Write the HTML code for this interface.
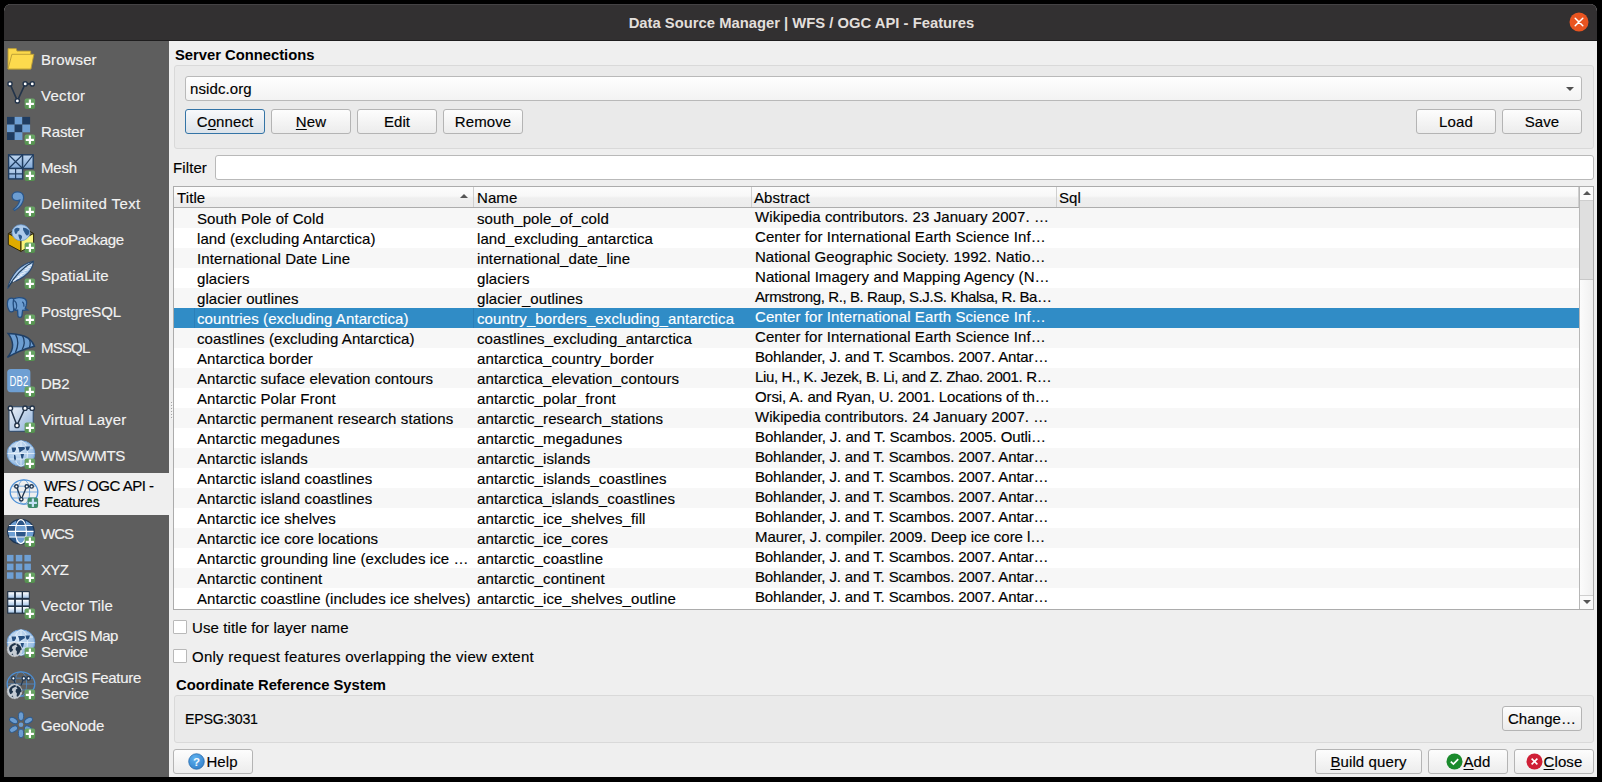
<!DOCTYPE html><html><head><meta charset="utf-8"><style>*{box-sizing:border-box;margin:0;padding:0}
html,body{width:1602px;height:782px;overflow:hidden;background:#000;font-family:"Liberation Sans",sans-serif;font-size:15px;letter-spacing:0.1px;color:#000;-webkit-text-stroke:0.15px currentColor}
#win{position:absolute;left:4px;top:4px;width:1593px;height:773px;background:#efefef;border-radius:7px 7px 0 0;overflow:hidden}
#titlebar{position:absolute;left:0;top:0;width:1593px;height:37px;background:#323031;border-bottom:1px solid #1e1d1e;box-shadow:inset 0 1px 0 #444244}
#title{position:absolute;-webkit-text-stroke:0;left:0;top:9px;width:1593px;text-align:center;color:#e2dfdb;font-weight:bold;font-size:14.8px;line-height:20px;padding-left:2px;letter-spacing:0}
#tclose{position:absolute;left:1565px;top:8px;width:20px;height:20px}
#tclose svg{display:block}
#sidebar{position:absolute;left:0;top:37px;width:165px;height:736px;background:#5e5e5e}
.item{position:absolute;left:0;width:165px}
.item.sel{background:#efefef}
.item .ico{position:absolute;left:0;top:0;width:36px;height:36px}
.item .ico svg{display:block}
.item.sel .ico{left:3px}
.item .lbl{position:absolute;left:37px;margin-top:1px;line-height:20px;color:#f2f2f2;white-space:nowrap}
.item .lbl2{position:absolute;left:37px;top:5px;line-height:16px;color:#f2f2f2;white-space:nowrap}
.item.sel .lbl2{left:40px;color:#000}
#main{position:absolute;left:165px;top:37px;width:1428px;height:736px}
.gtitle{position:absolute;-webkit-text-stroke:0;font-weight:bold;font-size:14.8px;line-height:20px;white-space:nowrap}
.gbox{position:absolute;background:#eaeaea;border:1px solid #d9d9d9;border-radius:3px}
.lab{position:absolute;line-height:20px;white-space:nowrap}
.combo{position:absolute;border:1px solid #b9b9b9;border-radius:3px;background:linear-gradient(#fefefe,#f3f3f3)}
.ctext{position:absolute;left:4px;top:2px;line-height:20px}
.carrow{position:absolute;right:7px;top:9.5px;width:0;height:0;border-left:4px solid transparent;border-right:4px solid transparent;border-top:4px solid #505050}
.btn{position:absolute;border:1px solid #b4b4b4;border-radius:3px;background:linear-gradient(#fdfdfd,#ececec);text-align:center}
.btn span{display:inline-flex;align-items:center;line-height:20px;margin-top:2px}
.btn.def{border-color:#3474a6;background:linear-gradient(#f8f9fb,#dce3ea)}
u{text-decoration:underline;text-underline-offset:2px}
.ledit{position:absolute;background:#fff;border:1px solid #b9b9b9;border-radius:3px}
#table{position:absolute;left:4px;top:145px;width:1421px;height:424px;border:1px solid #acacac;background:#fff;overflow:hidden}
#thead{position:absolute;left:0;top:0;width:1405px;height:21px;border-bottom:1px solid #adadad;background:linear-gradient(#fcfcfc 0,#f8f8f8 45%,#efefef 55%,#ececec 100%)}
.th{position:absolute;top:0;height:20px;border-right:1px solid #cfcfcf}
.th span{position:absolute;left:2px;top:1px;line-height:20px;white-space:nowrap}
.sortarrow{position:absolute;left:286px;top:7px;width:0;height:0;border-left:4px solid transparent;border-right:4px solid transparent;border-bottom:4px solid #555}
#tbody{position:absolute;left:0;top:21px;width:1405px;height:401px}
.row{position:absolute;left:0;width:1405px;height:20px;background:#fff}
.row.odd{background:#f7f7f7}
.row.sel{background:#308cc6;color:#fff}
.row span{position:absolute;top:1px;line-height:20px;white-space:nowrap}
.c1{left:23px}.c2{left:303px}.c3{left:581px;top:-1px!important}
#vscroll{position:absolute;left:1405px;top:0;width:14px;height:422px;border-left:1px solid #b7b7b7;background:linear-gradient(90deg,#fcfcfc,#f0f0f0)}
.sup,.sdown{position:absolute;left:0;width:13px;height:14px;background:#fafafa}
.sup{top:0;border-bottom:1px solid #cfcfcf}
.sdown{bottom:0;border-top:1px solid #cfcfcf}
.sup:after,.sdown:after{content:"";position:absolute;left:3px;width:0;height:0;border-left:4px solid transparent;border-right:4px solid transparent}
.sup:after{top:4px;border-bottom:4px solid #555}
.sdown:after{top:4px;border-top:4px solid #555}
.shandle{position:absolute;left:0;top:14px;width:13px;height:79px;background:#dfdfdf;border-bottom:1px solid #c9c9c9}
.chk{position:absolute;width:14px;height:14px;background:#fff;border:1px solid #b9b9b9;border-radius:1px}

.fl{position:absolute;top:0;width:1px;height:20px;background:#2b7fb8}
</style></head><body>
<svg width="0" height="0" style="position:absolute"><defs><linearGradient id="gbad" x1="0" y1="0" x2="0" y2="1"><stop offset="0" stop-color="#6ba867"/><stop offset="1" stop-color="#54904f"/></linearGradient><linearGradient id="gmesh" x1="0" y1="0" x2="0" y2="1"><stop offset="0" stop-color="#c2d8f0"/><stop offset="1" stop-color="#7ea6d6"/></linearGradient><linearGradient id="gvirt" x1="0" y1="0" x2="1" y2="1"><stop offset="0" stop-color="#eef3f9"/><stop offset="1" stop-color="#8fb1da"/></linearGradient><linearGradient id="gvt" x1="0" y1="0" x2="0" y2="1"><stop offset="0" stop-color="#ffffff"/><stop offset="1" stop-color="#a9c8ea"/></linearGradient><radialGradient id="gglobe" cx="0.4" cy="0.35" r="0.7"><stop offset="0" stop-color="#d6e6f6"/><stop offset="1" stop-color="#8db5e0"/></radialGradient></defs></svg>
<div id="win">
<div id="titlebar"><div id="title">Data Source Manager | WFS / OGC API - Features</div><div id="tclose"><svg width="20" height="20" viewBox="0 0 20 20"><circle cx="10" cy="10" r="9.5" fill="#e95420"/><path d="M6.2 6.2L13.8 13.8M13.8 6.2L6.2 13.8" stroke="#fff" stroke-width="1.5" stroke-linecap="round"/></svg></div></div>
<div id="sidebar">
<div class="item" style="top:0px;height:36px">
<div class="ico" style="top:0px"><svg width="36" height="36" viewBox="0 0 36 36" ><path d="M4 28V7.6h8.2l0.8 2.5h13.7V28Z" fill="#fcd84b" stroke="#b89b36" stroke-width="0.9"/><path d="M7.9 13.3H29.9L26.9 28H4Z" fill="#fdda4d" stroke="#b89b36" stroke-width="0.9"/></svg></div>
<div class="lbl" style="top:8px;letter-spacing:0.1px">Browser</div>
</div>
<div class="item" style="top:36px;height:36px">
<div class="ico" style="top:0px"><svg width="36" height="36" viewBox="0 0 36 36" ><path d="M6 6.9L13.4 23.9L21.2 6.9L28.3 6.9" fill="none" stroke="#23344a" stroke-width="1.6"/><circle cx="6" cy="6.9" r="2.1" fill="#fff" stroke="#23344a" stroke-width="1.4"/><circle cx="21.2" cy="6.9" r="2.1" fill="#fff" stroke="#23344a" stroke-width="1.4"/><circle cx="28.3" cy="6.9" r="2.1" fill="#fff" stroke="#23344a" stroke-width="1.4"/><circle cx="13.4" cy="23.9" r="2.1" fill="#fff" stroke="#23344a" stroke-width="1.4"/><rect x="20.6" y="21.4" width="10.5" height="10.5" rx="2" fill="url(#gbad)"/><rect x="21.8" y="25.8" width="8.1" height="2.2" fill="#fff"/><rect x="24.8" y="22.5" width="2.2" height="8.4" fill="#fff"/></svg></div>
<div class="lbl" style="top:8px;letter-spacing:0.3px">Vector</div>
</div>
<div class="item" style="top:72px;height:36px">
<div class="ico" style="top:0px"><svg width="36" height="36" viewBox="0 0 36 36" ><rect x="3.00" y="3.90" width="7.75" height="7.75" fill="#1f3c60"/><rect x="10.67" y="3.90" width="7.75" height="7.75" fill="#6e9fd3"/><rect x="18.34" y="3.90" width="7.75" height="7.75" fill="#1f3c60"/><rect x="3.00" y="11.57" width="7.75" height="7.75" fill="#6e9fd3"/><rect x="10.67" y="11.57" width="7.75" height="7.75" fill="#1f3c60"/><rect x="18.34" y="11.57" width="7.75" height="7.75" fill="#6e9fd3"/><rect x="3.00" y="19.24" width="7.75" height="7.75" fill="#1f3c60"/><rect x="10.67" y="19.24" width="7.75" height="7.75" fill="#6e9fd3"/><rect x="20.6" y="21.4" width="10.5" height="10.5" rx="2" fill="url(#gbad)"/><rect x="21.8" y="25.8" width="8.1" height="2.2" fill="#fff"/><rect x="24.8" y="22.5" width="2.2" height="8.4" fill="#fff"/></svg></div>
<div class="lbl" style="top:8px;letter-spacing:-0.13px">Raster</div>
</div>
<div class="item" style="top:108px;height:36px">
<div class="ico" style="top:0px"><svg width="36" height="36" viewBox="0 0 36 36" ><g stroke="#1f3c60" stroke-width="1.4" fill="url(#gmesh)"><rect x="4.6" y="5.8" width="14" height="13.7"/><rect x="18.6" y="5.8" width="10.6" height="13.7"/><rect x="4.6" y="19.5" width="14" height="10.4"/></g><path d="M4.6 5.8L18.6 19.5M18.6 5.8L4.6 19.5M18.6 19.5L29.2 5.8M11.6 19.5V29.9M4.6 24.9H18.6" stroke="#1f3c60" stroke-width="1.2" fill="none"/><rect x="20.6" y="21.4" width="10.5" height="10.5" rx="2" fill="url(#gbad)"/><rect x="21.8" y="25.8" width="8.1" height="2.2" fill="#fff"/><rect x="24.8" y="22.5" width="2.2" height="8.4" fill="#fff"/></svg></div>
<div class="lbl" style="top:8px;letter-spacing:-0.17px">Mesh</div>
</div>
<div class="item" style="top:144px;height:36px">
<div class="ico" style="top:0px"><svg width="36" height="36" viewBox="0 0 36 36" ><path d="M19.6 12.8C19.6 8.6 17.1 6.9 13.6 6.9C10.4 6.9 8.1 8.8 8.1 11.3C8.1 13.9 10.3 15.6 13.1 15.6C14.1 15.6 15.1 15.4 15.8 15.1C15.1 18.8 12.6 21.9 9.5 24.3L10.7 25.6C15.6 22.6 19.6 18.2 19.6 12.8Z" fill="#6c9dd1" stroke="#2a568a" stroke-width="1.2"/><rect x="20.6" y="21.4" width="10.5" height="10.5" rx="2" fill="url(#gbad)"/><rect x="21.8" y="25.8" width="8.1" height="2.2" fill="#fff"/><rect x="24.8" y="22.5" width="2.2" height="8.4" fill="#fff"/></svg></div>
<div class="lbl" style="top:8px;letter-spacing:0.41px">Delimited Text</div>
</div>
<div class="item" style="top:180px;height:36px">
<div class="ico" style="top:0px"><svg width="36" height="36" viewBox="0 0 36 36" ><path d="M4.3 12.5L8.6 10.2M29.6 12.5L25.4 10.2" stroke="#2a2408" stroke-width="1"/><path d="M4.3 12.5L17 19.2V30.4L4.3 23.6Z" fill="#dfab00" stroke="#2a2408" stroke-width="1"/><path d="M17 19.2L29.6 12.5V23.6L17 30.4Z" fill="#fbf47c" stroke="#2a2408" stroke-width="1"/><ellipse cx="16.9" cy="11.7" rx="8.9" ry="8" fill="#aecbeb" stroke="#6a9ad0" stroke-width="0.8"/><path d="M10.5 8C12 6.5 14.5 6.3 15.6 7.3L15.2 9.5L13.6 10.6L12.9 12.6L11.5 12.9C10.5 11.5 10 9.5 10.5 8Z M19 6.8C21 6.4 23.6 7.5 25 9.6C25.6 11.2 25.1 13.2 24.1 14.2L22.5 14.6L21 12.6L20 10.6C19.2 9.6 18.8 8.1 19 6.8Z M14.4 13.6C16 13.2 17.6 14 18.1 15.6C17.9 17.6 17.1 19.2 16.1 19.6L15.2 17.2C14.8 16 14.2 14.9 14.4 13.6Z" fill="#2d5b8e"/><rect x="20.6" y="21.4" width="10.5" height="10.5" rx="2" fill="url(#gbad)"/><rect x="21.8" y="25.8" width="8.1" height="2.2" fill="#fff"/><rect x="24.8" y="22.5" width="2.2" height="8.4" fill="#fff"/></svg></div>
<div class="lbl" style="top:8px;letter-spacing:-0.41px">GeoPackage</div>
</div>
<div class="item" style="top:216px;height:36px">
<div class="ico" style="top:0px"><svg width="36" height="36" viewBox="0 0 36 36" ><path d="M3.6 31.5C4.5 27 7.5 20 12.5 14C17 9 22.5 6 29.4 4.3C29.2 8.5 27.5 12.5 24 16C19.5 20.5 13 23.8 8 25C6.2 27 5 29.5 3.6 31.5Z" fill="#a8c7ea" stroke="#2a4a72" stroke-width="1.1"/><path d="M4.5 30C9 22 16 12 29 4.8" stroke="#23405f" stroke-width="1.2" fill="none"/><path d="M9 24.5L12 22.5M11 22.5L15.5 20.5M13.5 20L18.5 18M16 17.5L21.5 15.5M18.5 14.5L24.5 12.5M21 12L26.5 10M23.5 9.5L28 8" stroke="#e8f1fb" stroke-width="1.1"/><rect x="20.6" y="21.4" width="10.5" height="10.5" rx="2" fill="url(#gbad)"/><rect x="21.8" y="25.8" width="8.1" height="2.2" fill="#fff"/><rect x="24.8" y="22.5" width="2.2" height="8.4" fill="#fff"/></svg></div>
<div class="lbl" style="top:8px;letter-spacing:0.1px">SpatiaLite</div>
</div>
<div class="item" style="top:252px;height:36px">
<div class="ico" style="top:0px"><svg width="36" height="36" viewBox="0 0 36 36" ><path d="M10 5.6C7 4.6 4.3 5.4 3.7 8C3.1 11 3.6 15 5.1 17.5C6.1 19.2 7.8 19.2 9.6 18Z" fill="#6c9dd1" stroke="#244e80" stroke-width="1.3"/><path d="M9.6 6C12.2 4.4 17 4.1 20 5.4C22.6 6.6 23.1 9.6 22.1 13L21.2 15.4L23.6 17L18.6 17.3L17.9 22.8C17.6 25 14.1 25 13.9 22.8L13.6 17.2C11.6 17.6 10.1 17.1 9.6 15C9.1 12 9.1 8 9.6 6Z" fill="#6c9dd1" stroke="#244e80" stroke-width="1.3"/><path d="M10.2 7.5C11.8 8.6 12.8 10.6 12.7 13.2C12.6 15 12.1 16.2 11.2 16.8M18.3 8.8C19.6 9.8 20.2 11.6 19.9 13.8" stroke="#244e80" stroke-width="1.1" fill="none"/><rect x="20.6" y="21.4" width="10.5" height="10.5" rx="2" fill="url(#gbad)"/><rect x="21.8" y="25.8" width="8.1" height="2.2" fill="#fff"/><rect x="24.8" y="22.5" width="2.2" height="8.4" fill="#fff"/></svg></div>
<div class="lbl" style="top:8px;letter-spacing:-0.19px">PostgreSQL</div>
</div>
<div class="item" style="top:288px;height:36px">
<div class="ico" style="top:0px"><svg width="36" height="36" viewBox="0 0 36 36" ><path d="M4.2 4.6C12 5 19.5 6.2 24 9C27.2 11.4 29.5 14.5 30.4 17.2C22 19.4 12.2 23 3.4 28.4C6.5 24.8 8.8 21.5 8.6 16C8.3 11 6.3 7.2 4.2 4.6Z" fill="#6c9dd1" stroke="#1f3f66" stroke-width="1.5"/><path d="M11.5 5.3C14 9.5 14.5 16.5 11.5 23.5M18.5 6.5C20.5 10.5 21 15.5 18.2 20.5M25 9.8C26.5 12.5 26.5 15.5 25.5 18.2" stroke="#1f3f66" stroke-width="1.3" fill="none"/><rect x="20.6" y="21.4" width="10.5" height="10.5" rx="2" fill="url(#gbad)"/><rect x="21.8" y="25.8" width="8.1" height="2.2" fill="#fff"/><rect x="24.8" y="22.5" width="2.2" height="8.4" fill="#fff"/></svg></div>
<div class="lbl" style="top:8px;letter-spacing:-0.8px">MSSQL</div>
</div>
<div class="item" style="top:324px;height:36px">
<div class="ico" style="top:0px"><svg width="36" height="36" viewBox="0 0 36 36" ><rect x="3.2" y="4" width="23.2" height="23.2" rx="3.6" fill="#6e9fd3"/><text x="5.6" y="20.8" font-family="Liberation Sans" font-size="14.2" fill="#fff" textLength="18.8" lengthAdjust="spacingAndGlyphs">DB2</text><rect x="20.6" y="21.4" width="10.5" height="10.5" rx="2" fill="url(#gbad)"/><rect x="21.8" y="25.8" width="8.1" height="2.2" fill="#fff"/><rect x="24.8" y="22.5" width="2.2" height="8.4" fill="#fff"/></svg></div>
<div class="lbl" style="top:8px;letter-spacing:-0.33px">DB2</div>
</div>
<div class="item" style="top:360px;height:36px">
<div class="ico" style="top:0px"><svg width="36" height="36" viewBox="0 0 36 36" ><rect x="5" y="5.8" width="24.2" height="24.5" rx="1" fill="url(#gvirt)" stroke="#2c4868" stroke-width="1"/><path d="M6.4 7.2L13 24.4L21 7.2L28.2 7.2" fill="none" stroke="#23344a" stroke-width="1.5"/><circle cx="6.4" cy="7.2" r="2.2" fill="#fff" stroke="#23344a" stroke-width="1.4"/><circle cx="21" cy="7.2" r="2.2" fill="#fff" stroke="#23344a" stroke-width="1.4"/><circle cx="28.2" cy="7.2" r="2.2" fill="#fff" stroke="#23344a" stroke-width="1.4"/><circle cx="13" cy="24.4" r="2.2" fill="#fff" stroke="#23344a" stroke-width="1.4"/><rect x="20.6" y="21.4" width="10.5" height="10.5" rx="2" fill="url(#gbad)"/><rect x="21.8" y="25.8" width="8.1" height="2.2" fill="#fff"/><rect x="24.8" y="22.5" width="2.2" height="8.4" fill="#fff"/></svg></div>
<div class="lbl" style="top:8px;letter-spacing:0.1px">Virtual Layer</div>
</div>
<div class="item" style="top:396px;height:36px">
<div class="ico" style="top:0px"><svg width="36" height="36" viewBox="0 0 36 36" ><ellipse cx="17" cy="16.5" rx="13.8" ry="12.8" fill="url(#gglobe)" stroke="#6d9fd6" stroke-width="1"/><path d="M3.5 16.5H30.5M5 11H29M5.5 22H28.5M17 3.8V29.2" stroke="#e9f2fb" stroke-width="0.8" fill="none"/><ellipse cx="17" cy="16.5" rx="6.5" ry="12.6" stroke="#e9f2fb" stroke-width="0.8" fill="none"/><path d="M7.5 10.5H12V12.5L10.5 15H8.5ZM14 10H20.5L21 12L18.5 13.5L15.5 15.5L15 12.5ZM21.5 9.5H26L25 12.5L23 14L22 12Z M16.5 17H20L19 21.5L17.5 21.5ZM10 17.5L11.5 18.5L12 22L11 24L10 21.5Z" fill="#264f80"/><rect x="20.6" y="21.4" width="10.5" height="10.5" rx="2" fill="url(#gbad)"/><rect x="21.8" y="25.8" width="8.1" height="2.2" fill="#fff"/><rect x="24.8" y="22.5" width="2.2" height="8.4" fill="#fff"/></svg></div>
<div class="lbl" style="top:8px;letter-spacing:-0.34px">WMS/WMTS</div>
</div>
<div class="item sel" style="top:432px;height:42px">
<div class="ico" style="top:3px"><svg width="36" height="36" viewBox="0 0 36 36" ><ellipse cx="17" cy="16" rx="13.8" ry="12.2" fill="none" stroke="#4b8fd6" stroke-width="1.3"/><path d="M3.5 16H30.5M5.5 10.2H28.5M5.5 22H28.5" stroke="#4b8fd6" stroke-width="0.9" fill="none" opacity="0.8"/><ellipse cx="16.7" cy="16" rx="6" ry="12.2" stroke="#4b8fd6" stroke-width="0.9" fill="none" opacity="0.8"/><path d="M9.4 10.4L14.3 23.3L19.8 10.4L24.6 10.4" fill="none" stroke="#1f3651" stroke-width="1.3"/><circle cx="9.4" cy="10.4" r="1.7" fill="#fff" stroke="#1f3651" stroke-width="1.4"/><circle cx="19.8" cy="10.4" r="1.7" fill="#fff" stroke="#1f3651" stroke-width="1.4"/><circle cx="24.6" cy="10.4" r="1.7" fill="#fff" stroke="#1f3651" stroke-width="1.4"/><circle cx="14.3" cy="23.3" r="1.7" fill="#fff" stroke="#1f3651" stroke-width="1.4"/><rect x="20.6" y="21.4" width="10.5" height="10.5" rx="2" fill="#3f8c6c"/><rect x="21.8" y="25.8" width="8.1" height="2.2" fill="#c6e1f5"/><rect x="24.8" y="22.5" width="2.2" height="8.4" fill="#c6e1f5"/></svg></div>
<div class="lbl2" style="letter-spacing:-0.47px">WFS / OGC API -<br>Features</div>
</div>
<div class="item" style="top:474px;height:36px">
<div class="ico" style="top:0px"><svg width="36" height="36" viewBox="0 0 36 36" ><defs><clipPath id="cwcs"><ellipse cx="16.9" cy="16.6" rx="13.3" ry="12.3"/></clipPath></defs><g clip-path="url(#cwcs)"><rect x="0" y="0" width="36" height="36" fill="#6e9fd3"/><rect x="0" y="10.8" width="36" height="5.6" fill="#2c5688"/><rect x="0" y="22.3" width="36" height="8" fill="#2c5688"/><rect x="12" y="4" width="10" height="6.2" fill="#2c5688"/><rect x="12" y="10.8" width="10" height="5.6" fill="#6e9fd3"/><rect x="12" y="16.4" width="10" height="5.9" fill="#2c5688"/><rect x="12" y="22.3" width="10" height="8" fill="#6e9fd3"/></g><ellipse cx="16.9" cy="16.6" rx="13.3" ry="12.3" fill="none" stroke="#1d3553" stroke-width="1.2"/><path d="M5 10.5H28.5M4 16.4H29.5M5 22H28.5" stroke="#fff" stroke-width="1.1"/><ellipse cx="16.9" cy="16.6" rx="5.5" ry="12" fill="none" stroke="#fff" stroke-width="1.1"/><rect x="20.6" y="21.4" width="10.5" height="10.5" rx="2" fill="url(#gbad)"/><rect x="21.8" y="25.8" width="8.1" height="2.2" fill="#fff"/><rect x="24.8" y="22.5" width="2.2" height="8.4" fill="#fff"/></svg></div>
<div class="lbl" style="top:8px;letter-spacing:-1.0px">WCS</div>
</div>
<div class="item" style="top:510px;height:36px">
<div class="ico" style="top:0px"><svg width="36" height="36" viewBox="0 0 36 36" ><rect x="3" y="3.9" width="6.5" height="6.5" fill="#6e9fd3"/><rect x="11.8" y="3.9" width="6.5" height="6.5" fill="#6e9fd3"/><rect x="20.4" y="3.9" width="6.5" height="6.5" fill="#6e9fd3"/><rect x="3" y="12.6" width="6.5" height="6.5" fill="#6e9fd3"/><rect x="11.8" y="12.6" width="6.5" height="6.5" fill="#6e9fd3"/><rect x="20.4" y="12.6" width="6.5" height="6.5" fill="#6e9fd3"/><rect x="3" y="21.3" width="6.5" height="6.5" fill="#6e9fd3"/><rect x="11.8" y="21.3" width="6.5" height="6.5" fill="#6e9fd3"/><rect x="20.6" y="21.4" width="10.5" height="10.5" rx="2" fill="url(#gbad)"/><rect x="21.8" y="25.8" width="8.1" height="2.2" fill="#fff"/><rect x="24.8" y="22.5" width="2.2" height="8.4" fill="#fff"/></svg></div>
<div class="lbl" style="top:8px;letter-spacing:-0.63px">XYZ</div>
</div>
<div class="item" style="top:546px;height:36px">
<div class="ico" style="top:0px"><svg width="36" height="36" viewBox="0 0 36 36" ><rect x="3.2" y="4.1" width="22.4" height="22.6" fill="#1f3044"/><rect x="4.3" y="5.2" width="5.8" height="5.6" fill="url(#gvt)"/><rect x="11.9" y="5.2" width="5.8" height="5.6" fill="url(#gvt)"/><rect x="19.0" y="5.2" width="5.8" height="5.6" fill="url(#gvt)"/><rect x="4.3" y="12.8" width="5.8" height="5.6" fill="url(#gvt)"/><rect x="11.9" y="12.8" width="5.8" height="5.6" fill="url(#gvt)"/><rect x="19.0" y="12.8" width="5.8" height="5.6" fill="url(#gvt)"/><rect x="4.3" y="20.0" width="5.8" height="5.6" fill="url(#gvt)"/><rect x="11.9" y="20.0" width="5.8" height="5.6" fill="url(#gvt)"/><rect x="19.0" y="20.0" width="5.8" height="5.6" fill="url(#gvt)"/><rect x="20.6" y="21.4" width="10.5" height="10.5" rx="2" fill="url(#gbad)"/><rect x="21.8" y="25.8" width="8.1" height="2.2" fill="#fff"/><rect x="24.8" y="22.5" width="2.2" height="8.4" fill="#fff"/></svg></div>
<div class="lbl" style="top:8px;letter-spacing:0.18px">Vector Tile</div>
</div>
<div class="item" style="top:582px;height:42px">
<div class="ico" style="top:3px"><svg width="36" height="36" viewBox="0 0 36 36" ><ellipse cx="17" cy="16.5" rx="13.8" ry="12.8" fill="url(#gglobe)" stroke="#6d9fd6" stroke-width="1"/><path d="M3.5 16.5H30.5M5 11H29M5.5 22H28.5M17 3.8V29.2" stroke="#e9f2fb" stroke-width="0.8" fill="none"/><ellipse cx="17" cy="16.5" rx="6.5" ry="12.6" stroke="#e9f2fb" stroke-width="0.8" fill="none"/><path d="M7.5 10.5H12V12.5L10.5 15H8.5ZM14 10H20.5L21 12L18.5 13.5L15.5 15.5L15 12.5ZM21.5 9.5H26L25 12.5L23 14L22 12Z M16.5 17H20L19 21.5L17.5 21.5ZM10 17.5L11.5 18.5L12 22L11 24L10 21.5Z" fill="#264f80"/><circle cx="10.6" cy="23.4" r="7.3" fill="#c5ccd4" stroke="#e4e7ea" stroke-width="0.7" stroke-dasharray="1 0.6"/><path d="M5.2 21.5C6.2 19 8.5 17.2 11 17L12.5 18.2L10.5 19.2L8.5 20.2L7.8 22.2L9.2 23.4L8.2 25.2L6.4 26.2C5.4 24.8 5 23 5.2 21.5Z" fill="#1f3349"/><path d="M12.8 17.4C15.4 18.2 17.4 20.6 17.8 23.4L16.4 24.2L15.6 26.6L13.8 28.8L12.6 28.2L12.9 25.6L11.6 23.8L11.9 21.4L13.6 20.4L12.4 19.2Z" fill="#1f3349"/><path d="M7.5 28.2L9.5 29.6L8.6 27.6Z" fill="#1f3349"/><rect x="20.6" y="21.4" width="10.5" height="10.5" rx="2" fill="url(#gbad)"/><rect x="21.8" y="25.8" width="8.1" height="2.2" fill="#fff"/><rect x="24.8" y="22.5" width="2.2" height="8.4" fill="#fff"/></svg></div>
<div class="lbl2" style="letter-spacing:-0.47px">ArcGIS Map<br>Service</div>
</div>
<div class="item" style="top:624px;height:42px">
<div class="ico" style="top:3px"><svg width="36" height="36" viewBox="0 0 36 36" ><ellipse cx="17" cy="16" rx="13.8" ry="12.2" fill="none" stroke="#4b8fd6" stroke-width="1.3"/><path d="M3.5 16H30.5M5.5 10.2H28.5M5.5 22H28.5" stroke="#4b8fd6" stroke-width="0.9" fill="none" opacity="0.8"/><ellipse cx="16.7" cy="16" rx="6" ry="12.2" stroke="#4b8fd6" stroke-width="0.9" fill="none" opacity="0.8"/><path d="M9.4 10.4L11.5 17M19.8 10.4L17 17.5M19.8 10.4H24.6" stroke="#1f3651" stroke-width="1.2" fill="none"/><circle cx="9.4" cy="10.4" r="1.7" fill="#fff" stroke="#1f3651" stroke-width="1.3"/><circle cx="19.8" cy="10.4" r="1.7" fill="#fff" stroke="#1f3651" stroke-width="1.3"/><circle cx="24.6" cy="10.4" r="1.7" fill="#fff" stroke="#1f3651" stroke-width="1.3"/><circle cx="10.6" cy="23.4" r="7.3" fill="#c5ccd4" stroke="#e4e7ea" stroke-width="0.7" stroke-dasharray="1 0.6"/><path d="M5.2 21.5C6.2 19 8.5 17.2 11 17L12.5 18.2L10.5 19.2L8.5 20.2L7.8 22.2L9.2 23.4L8.2 25.2L6.4 26.2C5.4 24.8 5 23 5.2 21.5Z" fill="#1f3349"/><path d="M12.8 17.4C15.4 18.2 17.4 20.6 17.8 23.4L16.4 24.2L15.6 26.6L13.8 28.8L12.6 28.2L12.9 25.6L11.6 23.8L11.9 21.4L13.6 20.4L12.4 19.2Z" fill="#1f3349"/><path d="M7.5 28.2L9.5 29.6L8.6 27.6Z" fill="#1f3349"/><rect x="20.6" y="21.4" width="10.5" height="10.5" rx="2" fill="url(#gbad)"/><rect x="21.8" y="25.8" width="8.1" height="2.2" fill="#fff"/><rect x="24.8" y="22.5" width="2.2" height="8.4" fill="#fff"/></svg></div>
<div class="lbl2" style="letter-spacing:-0.3px">ArcGIS Feature<br>Service</div>
</div>
<div class="item" style="top:666px;height:36px">
<div class="ico" style="top:0px"><svg width="36" height="36" viewBox="0 0 36 36" ><ellipse cx="17" cy="9.200000000000001" rx="2.6" ry="4.3" transform="rotate(0 17 17.8)" fill="#6c9dd1" stroke="#2c5a8e" stroke-width="0.9"/><ellipse cx="17" cy="9.200000000000001" rx="2.6" ry="4.3" transform="rotate(60 17 17.8)" fill="#6c9dd1" stroke="#2c5a8e" stroke-width="0.9"/><ellipse cx="17" cy="9.200000000000001" rx="2.6" ry="4.3" transform="rotate(120 17 17.8)" fill="#6c9dd1" stroke="#2c5a8e" stroke-width="0.9"/><ellipse cx="17" cy="9.200000000000001" rx="2.6" ry="4.3" transform="rotate(180 17 17.8)" fill="#6c9dd1" stroke="#2c5a8e" stroke-width="0.9"/><ellipse cx="17" cy="9.200000000000001" rx="2.6" ry="4.3" transform="rotate(240 17 17.8)" fill="#6c9dd1" stroke="#2c5a8e" stroke-width="0.9"/><ellipse cx="17" cy="9.200000000000001" rx="2.6" ry="4.3" transform="rotate(300 17 17.8)" fill="#6c9dd1" stroke="#2c5a8e" stroke-width="0.9"/><circle cx="17" cy="17.8" r="2.3" fill="#6c9dd1"/><rect x="20.6" y="21.4" width="10.5" height="10.5" rx="2" fill="url(#gbad)"/><rect x="21.8" y="25.8" width="8.1" height="2.2" fill="#fff"/><rect x="24.8" y="22.5" width="2.2" height="8.4" fill="#fff"/></svg></div>
<div class="lbl" style="top:8px;letter-spacing:-0.14px">GeoNode</div>
</div>
</div>
<div id="main">
<div class="gtitle" style="left:6px;top:4px;letter-spacing:-0.02px">Server Connections</div>
<div class="gbox" style="left:5px;top:24px;width:1420px;height:84px"></div>
<div class="combo" style="left:16px;top:35px;width:1397px;height:25px"><span class="ctext">nsidc.org</span><span class="carrow"></span></div>
<div class="btn def" style="left:16px;top:68px;width:80px;height:25px"><span>C<u>o</u>nnect</span></div>
<div class="btn " style="left:102px;top:68px;width:80px;height:25px"><span><u>N</u>ew</span></div>
<div class="btn " style="left:188px;top:68px;width:80px;height:25px"><span>Edit</span></div>
<div class="btn " style="left:274px;top:68px;width:80px;height:25px"><span>Remove</span></div>
<div class="btn " style="left:1247px;top:68px;width:80px;height:25px"><span>Load</span></div>
<div class="btn " style="left:1333px;top:68px;width:80px;height:25px"><span>Save</span></div>
<div class="lab" style="left:4px;top:117px">Filter</div>
<div class="ledit" style="left:46px;top:114px;width:1379px;height:25px"></div>
<div id="table">
<div id="thead">
<div class="th" style="left:0px;width:300px"><span style="left:3px">Title</span></div>
<div class="th" style="left:300px;width:278px"><span style="left:3px">Name</span></div>
<div class="th" style="left:578px;width:305px"><span style="left:2px">Abstract</span></div>
<div class="th" style="left:883px;width:522px"><span style="left:2px">Sql</span></div>
<div class="sortarrow"></div>
</div>
<div id="tbody">
<div class="row odd" style="top:0px"><span class="c1">South Pole of Cold</span><span class="c2">south_pole_of_cold</span><span class="c3" style="letter-spacing:0.071px">Wikipedia contributors. 23 January 2007. …</span></div>
<div class="row" style="top:20px"><span class="c1">land (excluding Antarctica)</span><span class="c2">land_excluding_antarctica</span><span class="c3" style="letter-spacing:0.091px">Center for International Earth Science Inf…</span></div>
<div class="row odd" style="top:40px"><span class="c1">International Date Line</span><span class="c2">international_date_line</span><span class="c3" style="letter-spacing:0.039px">National Geographic Society. 1992. Natio…</span></div>
<div class="row" style="top:60px"><span class="c1">glaciers</span><span class="c2">glaciers</span><span class="c3" style="letter-spacing:0.049px">National Imagery and Mapping Agency (N…</span></div>
<div class="row odd" style="top:80px"><span class="c1">glacier outlines</span><span class="c2">glacier_outlines</span><span class="c3" style="letter-spacing:-0.393px">Armstrong, R., B. Raup, S.J.S. Khalsa, R. Ba…</span></div>
<div class="row sel" style="top:100px"><i class="fl" style="left:20px"></i><i class="fl" style="left:299px"></i><span class="c1">countries (excluding Antarctica)</span><span class="c2">country_borders_excluding_antarctica</span><span class="c3" style="letter-spacing:0.091px">Center for International Earth Science Inf…</span></div>
<div class="row odd" style="top:120px"><span class="c1">coastlines (excluding Antarctica)</span><span class="c2">coastlines_excluding_antarctica</span><span class="c3" style="letter-spacing:0.091px">Center for International Earth Science Inf…</span></div>
<div class="row" style="top:140px"><span class="c1">Antarctica border</span><span class="c2">antarctica_country_border</span><span class="c3" style="letter-spacing:-0.138px">Bohlander, J. and T. Scambos. 2007. Antar…</span></div>
<div class="row odd" style="top:160px"><span class="c1">Antarctic suface elevation contours</span><span class="c2">antarctica_elevation_contours</span><span class="c3" style="letter-spacing:-0.347px">Liu, H., K. Jezek, B. Li, and Z. Zhao. 2001. R…</span></div>
<div class="row" style="top:180px"><span class="c1">Antarctic Polar Front</span><span class="c2">antarctic_polar_front</span><span class="c3" style="letter-spacing:-0.107px">Orsi, A. and Ryan, U. 2001. Locations of th…</span></div>
<div class="row odd" style="top:200px"><span class="c1">Antarctic permanent research stations</span><span class="c2">antarctic_research_stations</span><span class="c3" style="letter-spacing:0.057px">Wikipedia contributors. 24 January 2007. …</span></div>
<div class="row" style="top:220px"><span class="c1">Antarctic megadunes</span><span class="c2">antarctic_megadunes</span><span class="c3" style="letter-spacing:-0.093px">Bohlander, J. and T. Scambos. 2005. Outli…</span></div>
<div class="row odd" style="top:240px"><span class="c1">Antarctic islands</span><span class="c2">antarctic_islands</span><span class="c3" style="letter-spacing:-0.136px">Bohlander, J. and T. Scambos. 2007. Antar…</span></div>
<div class="row" style="top:260px"><span class="c1">Antarctic island coastlines</span><span class="c2">antarctic_islands_coastlines</span><span class="c3" style="letter-spacing:-0.136px">Bohlander, J. and T. Scambos. 2007. Antar…</span></div>
<div class="row odd" style="top:280px"><span class="c1">Antarctic island coastlines</span><span class="c2">antarctica_islands_coastlines</span><span class="c3" style="letter-spacing:-0.136px">Bohlander, J. and T. Scambos. 2007. Antar…</span></div>
<div class="row" style="top:300px"><span class="c1">Antarctic ice shelves</span><span class="c2">antarctic_ice_shelves_fill</span><span class="c3" style="letter-spacing:-0.136px">Bohlander, J. and T. Scambos. 2007. Antar…</span></div>
<div class="row odd" style="top:320px"><span class="c1">Antarctic ice core locations</span><span class="c2">antarctic_ice_cores</span><span class="c3" style="letter-spacing:-0.035px">Maurer, J. compiler. 2009. Deep ice core l…</span></div>
<div class="row" style="top:340px"><span class="c1">Antarctic grounding line (excludes ice …</span><span class="c2">antarctic_coastline</span><span class="c3" style="letter-spacing:-0.136px">Bohlander, J. and T. Scambos. 2007. Antar…</span></div>
<div class="row odd" style="top:360px"><span class="c1">Antarctic continent</span><span class="c2">antarctic_continent</span><span class="c3" style="letter-spacing:-0.136px">Bohlander, J. and T. Scambos. 2007. Antar…</span></div>
<div class="row" style="top:380px"><span class="c1">Antarctic coastline (includes ice shelves)</span><span class="c2">antarctic_ice_shelves_outline</span><span class="c3" style="letter-spacing:-0.136px">Bohlander, J. and T. Scambos. 2007. Antar…</span></div>
</div>
<div id="vscroll"><div class="sup"></div><div class="shandle"></div><div class="sdown"></div></div>
</div>
<div style="position:absolute;left:2px;top:361px;width:1px;height:1px;background:#a4a4a4;box-shadow:1px 1px 0 #fafafa"></div>
<div style="position:absolute;left:2px;top:364px;width:1px;height:1px;background:#a4a4a4;box-shadow:1px 1px 0 #fafafa"></div>
<div style="position:absolute;left:2px;top:367px;width:1px;height:1px;background:#a4a4a4;box-shadow:1px 1px 0 #fafafa"></div>
<div style="position:absolute;left:2px;top:370px;width:1px;height:1px;background:#a4a4a4;box-shadow:1px 1px 0 #fafafa"></div>
<div style="position:absolute;left:2px;top:373px;width:1px;height:1px;background:#a4a4a4;box-shadow:1px 1px 0 #fafafa"></div>
<div style="position:absolute;left:2px;top:376px;width:1px;height:1px;background:#a4a4a4;box-shadow:1px 1px 0 #fafafa"></div>
<div class="chk" style="left:4px;top:579px"></div><div class="lab" style="left:23px;top:577px">Use title for layer name</div>
<div class="chk" style="left:4px;top:608px"></div><div class="lab" style="left:23px;top:606px;letter-spacing:0.257px">Only request features overlapping the view extent</div>
<div class="gtitle" style="left:7px;top:634px;letter-spacing:-0.02px">Coordinate Reference System</div>
<div class="gbox" style="left:5px;top:654px;width:1420px;height:48px"></div>
<div class="lab" style="left:16px;top:668px;font-size:14.2px;letter-spacing:-0.25px">EPSG:3031</div>
<div class="btn" style="left:1333px;top:665px;width:80px;height:25px"><span>Change…</span></div>
<div class="btn" style="left:4px;top:708px;width:80px;height:25px"><span><svg width="17" height="17" viewBox="0 0 17 17" style="margin-right:1px;margin-top:-2px"><defs><radialGradient id="ghelp" cx="0.4" cy="0.3" r="0.8"><stop offset="0" stop-color="#5fb2f0"/><stop offset="1" stop-color="#2f7dc8"/></radialGradient></defs><circle cx="8.5" cy="8.5" r="7.8" fill="url(#ghelp)" stroke="#2466a8" stroke-width="0.7"/><text x="8.5" y="12.8" text-anchor="middle" font-family="Liberation Sans" font-size="11.5" font-weight="bold" fill="#f4f9fd" style="-webkit-text-stroke:0">?</text></svg>Help</span></div>
<div class="btn" style="left:1146px;top:708px;width:107px;height:25px"><span><u>B</u>uild query</span></div>
<div class="btn" style="left:1259px;top:708px;width:80px;height:25px"><span><svg width="17" height="17" viewBox="0 0 17 17" style="margin-right:1px;margin-top:-2px"><circle cx="8.5" cy="8.5" r="8" fill="#1a8a2c"/><path d="M4.8 8.6L7.4 11.1L12.2 6.1" stroke="#fff" stroke-width="1.7" fill="none"/></svg><u>A</u>dd</span></div>
<div class="btn" style="left:1345px;top:708px;width:80px;height:25px"><span><svg width="17" height="17" viewBox="0 0 17 17" style="margin-right:1px;margin-top:-2px"><circle cx="8.5" cy="8.5" r="8" fill="#cf1f36"/><path d="M5.6 5.6L11.4 11.4M11.4 5.6L5.6 11.4" stroke="#fff" stroke-width="1.6"/></svg><u>C</u>lose</span></div>
</div>
</div></body></html>
